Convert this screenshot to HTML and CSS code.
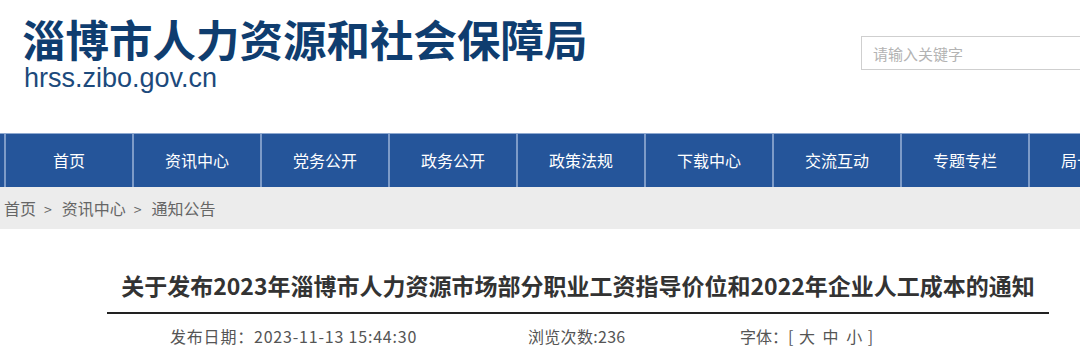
FILE: index.html
```html
<!DOCTYPE html>
<html lang="zh-CN">
<head>
    <meta charset="UTF-8">
    <meta name="viewport" content="width=device-width, initial-scale=1.0">
    <title>淄博市人力资源和社会保障局</title>
    <link rel="stylesheet" href="styles.css">
</head>
<body>
    <div class="header">
        <div class="logo">
            <div class="logo-name">淄博市人力资源和社会保障局</div>
            <div class="logo-url">hrss.zibo.gov.cn</div>
        </div>
        <div class="search">
            <input type="text" placeholder="请输入关键字">
        </div>
    </div>

    <div class="nav">
        <a href="#">首页</a>
        <a href="#">资讯中心</a>
        <a href="#">党务公开</a>
        <a href="#">政务公开</a>
        <a href="#">政策法规</a>
        <a href="#">下载中心</a>
        <a href="#">交流互动</a>
        <a href="#">专题专栏</a>
        <a href="#">局长信箱</a>
    </div>

    <div class="crumb">
        <a href="#">首页</a><span class="sep">&gt;</span><a href="#">资讯中心</a><span class="sep">&gt;</span><a href="#">通知公告</a>
    </div>

    <div class="article">
        <h1 class="title">关于发布2023年淄博市人力资源市场部分职业工资指导价位和2022年企业人工成本的通知</h1>
        <div class="meta">
            <span class="date">发布日期：2023-11-13 15:44:30</span>
            <span class="views">浏览次数:236</span>
            <span class="size">字体：[ <a href="#">大</a> <a href="#">中</a> <a href="#">小</a> ]</span>
        </div>
    </div>
</body>
</html>
```

FILE: styles.css
```css
body{
    margin: 0;
    background: #fff;
    font-family: "Noto Sans CJK SC", "Noto Sans", sans-serif;
    overflow: hidden;
}
a{
    color: inherit;
    text-decoration: none;
}
.header{
    display: flex;
    height: 133px;
}
.logo{
    padding: 15px 0 0 22px;
}
.logo-name{
    font-size: 43.5px;
    font-weight: bold;
    line-height: 48px;
    color: #0f3d6f;
}
.logo-url{
    font-family: "Liberation Sans", Arial, sans-serif;
    font-size: 27px;
    line-height: 31px;
    color: #1c4a7c;
    margin-left: 2px;
}
.search{
    margin-left: auto;
    margin-right: -60px;
    padding-top: 36px;
}
.search input{
    width: 279px;
    height: 34px;
    box-sizing: border-box;
    border: 1px solid #cfcfcf;
    padding: 0 11px;
    font-family: inherit;
    font-size: 15px;
    outline: none;
}
.search input::placeholder{
    color: #b3b3b3;
}
.nav{
    display: flex;
    height: 53px;
    padding-left: 4px;
    background: #25559a;
    border-top: 1px solid #8fa9d0;
}
.nav a{
    flex: 0 0 128px;
    box-sizing: border-box;
    border-left: 2px solid #7d9bc8;
    color: #fff;
    font-size: 16px;
    line-height: 53px;
    text-align: center;
}
.crumb{
    height: 42px;
    line-height: 42px;
    padding-left: 4px;
    background: #ececec;
    color: #666;
    font-size: 16px;
}
.crumb .sep{
    margin: 0 10px 0 8px;
    font-size: 14px;
}
.article{
    width: 942px;
    margin-left: 107px;
}
.title{
    margin: 38px 0 0;
    padding-bottom: 9px;
    border-bottom: 2px solid #222;
    font-size: 23px;
    line-height: 36px;
    font-weight: bold;
    color: #333;
    text-align: center;
}
.meta{
    display: flex;
    padding-left: 63px;
    font-size: 16px;
    line-height: 44px;
    color: #555;
}
.meta .date{
    width: 358px;
    letter-spacing: 0.8px;
}
.meta .views{
    width: 212px;
    letter-spacing: 0.3px;
}
.meta .size a{
    margin: 0 2px;
}
```
